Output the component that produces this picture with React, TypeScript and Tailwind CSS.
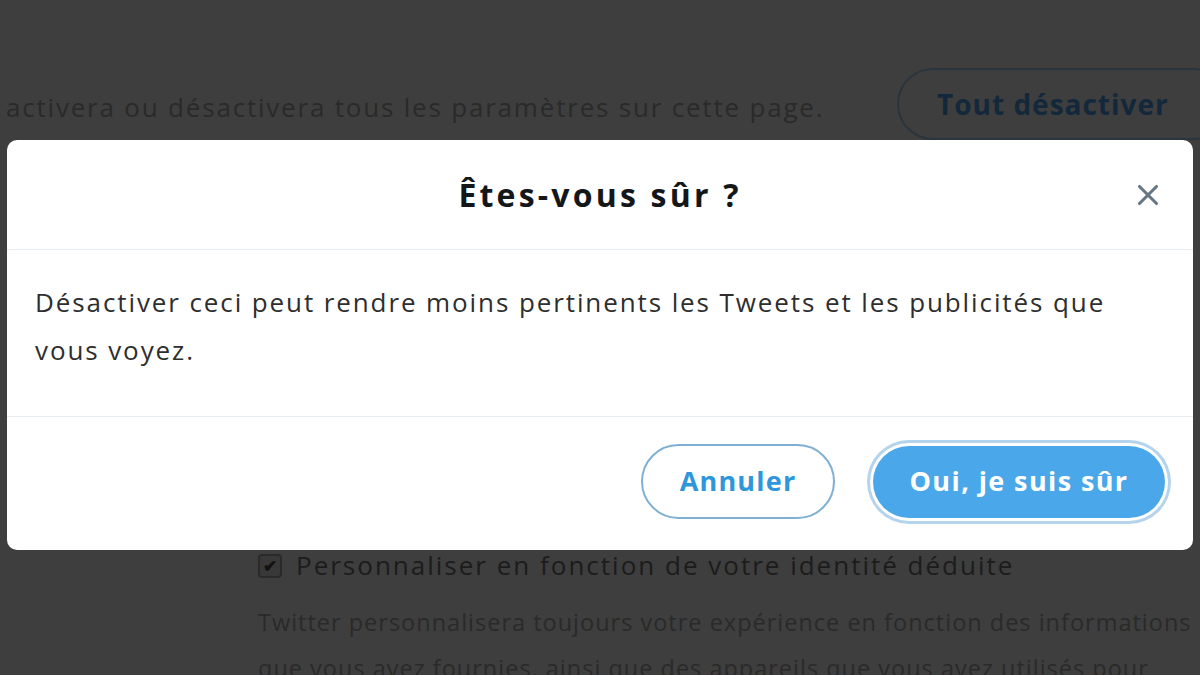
import { X } from 'lucide-react';

const font = { fontFamily: '"Open Sans", "Noto Sans", sans-serif' };

function Backdrop() {
  return (
    <div className="flex h-full flex-col bg-[#3e3e3e] text-[#262626]">
      <div className="flex items-center pt-[68px]">
        <p className="whitespace-nowrap pl-[6px] pt-[6px] text-[26px] tracking-[1.8px] text-[#2a2a2a]">
          activera ou désactivera tous les paramètres sur cette page.
        </p>
        <div className="-mr-[30px] ml-auto flex h-[72px] w-[333px] shrink-0 items-center rounded-full border-2 border-[#2b343c] pl-[38px] text-[28px] font-bold tracking-[1px] text-[#13283b]">
          Tout désactiver
        </div>
      </div>

      <div className="mt-[406px] pl-[258px]">
        <div className="flex items-center gap-[14px]">
          <span className="flex h-[24px] w-[24px] items-center justify-center rounded-[4px] border-2 border-[#2a2a2a] bg-[#383838] text-[17px] font-bold leading-none text-[#111111]">
            ✔
          </span>
          <span className="whitespace-nowrap text-[26px] tracking-[2px] text-[#1c1c1c]">
            Personnaliser en fonction de votre identité déduite
          </span>
        </div>
        <p className="mt-[14px] whitespace-nowrap text-[23.5px] leading-[46px] tracking-[1px] text-[#2a2a2a]">
          Twitter personnalisera toujours votre expérience en fonction des informations
          <br />
          que vous avez fournies, ainsi que des appareils que vous avez utilisés pour
        </p>
      </div>
    </div>
  );
}

function ConfirmDialog() {
  return (
    <div className="absolute left-[7px] top-[140px] flex h-[410px] w-[1186px] flex-col rounded-[10px] bg-white">
      <div className="relative flex h-[110px] items-center justify-center border-b border-[#e6ecf0]">
        <h2 className="text-[32px] font-bold tracking-[3.2px] text-[#14171a]">Êtes-vous sûr ?</h2>
        <button
          aria-label="Fermer"
          className="absolute right-[28px] top-[38px] text-[#657786]"
        >
          <X size={34} strokeWidth={2.2} />
        </button>
      </div>

      <div className="h-[167px] border-b border-[#e6ecf0] px-[28px] pt-[28px]">
        <p className="whitespace-nowrap text-[26px] leading-[48px] tracking-[1.9px] text-[#2e2e2e]">
          Désactiver ceci peut rendre moins pertinents les Tweets et les publicités que
          <br />
          vous voyez.
        </p>
      </div>

      <div className="flex flex-1 items-center justify-end gap-[38px] pb-[4px] pr-[28px]">
        <button className="h-[75px] w-[194px] rounded-full border-2 border-[#7fb0d3] text-[27px] font-bold tracking-[1.2px] text-[#2e96da]">
          Annuler
        </button>
        <button className="h-[72px] w-[292px] rounded-full bg-[#4aa7ea] text-[27px] font-bold tracking-[1.4px] text-white ring-[3px] ring-[#b3d4ec] ring-offset-[3px]">
          Oui, je suis sûr
        </button>
      </div>
    </div>
  );
}

export default function App() {
  return (
    <div className="relative h-[675px] w-[1200px] overflow-hidden" style={font}>
      <Backdrop />
      <ConfirmDialog />
    </div>
  );
}
